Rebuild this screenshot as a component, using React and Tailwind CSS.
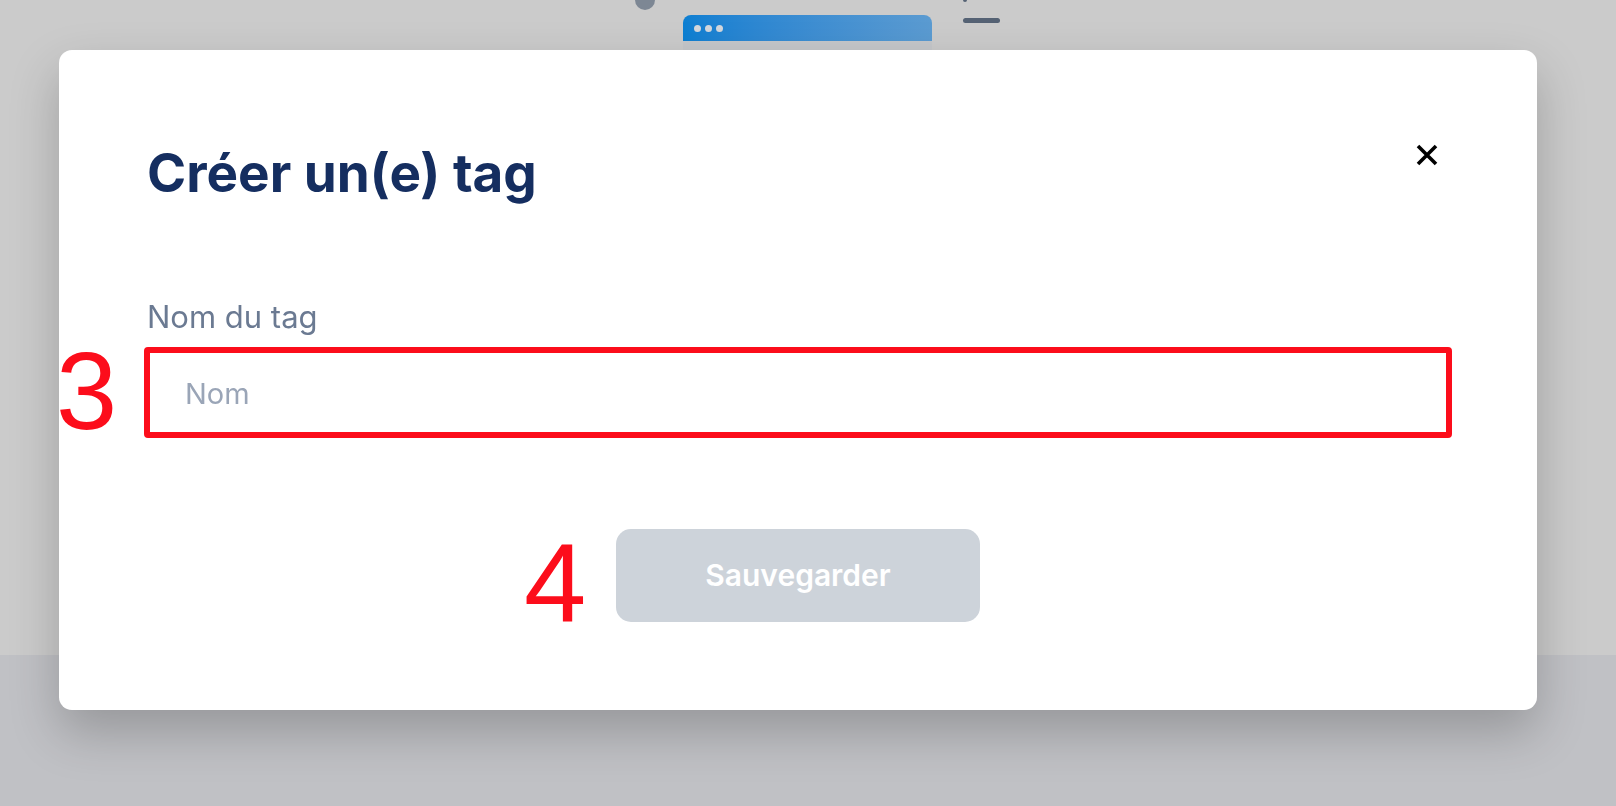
import React from 'react'

const App = () => {
  return (
    <div className="relative flex h-[806px] w-[1616px] flex-col overflow-hidden bg-[#cbcbcb] font-['Inter',sans-serif]">
      {/* page behind the scrim */}
      <div className="flex h-[655px] items-start pl-[635px]">
        <div className="mt-[-10px] h-[20px] w-[20px] rounded-full bg-[#7d8794]" />
        <div className="ml-[28px] mt-[15px] w-[249px]">
          <div className="flex h-[26px] items-center gap-[4px] rounded-t-[8px] bg-linear-to-r from-[#0c7fd2] to-[#5b9bd1] pl-[11px]">
            <span className="h-[7px] w-[7px] rounded-full bg-[#d3d7dc]" />
            <span className="h-[7px] w-[7px] rounded-full bg-[#d3d7dc]" />
            <span className="h-[7px] w-[7px] rounded-full bg-[#d3d7dc]" />
          </div>
          <div className="h-[20px] bg-[#c5c7ca]" />
        </div>
        <div className="ml-[31px] flex flex-col">
          <div className="mt-[-2px] h-[4px] w-[4px] rounded-full bg-[#556274]" />
          <div className="mt-[16px] h-[5px] w-[37px] rounded-full bg-[#556274]" />
        </div>
      </div>
      <div className="flex-1 bg-[#c0c1c5]" />

      {/* Modal */}
      <div className="fixed left-[59px] top-[50px] w-[1478px] rounded-[13px] bg-white px-[88px] pb-[88px] pt-[97px] shadow-[0_22px_50px_rgba(0,0,0,0.22)]">
        <div className="flex items-start justify-between">
          <h2 className="text-[53px] font-bold leading-none text-[#152e60]">
            Créer un(e) tag
          </h2>
          <button className="mr-[11px] mt-[-3px]">
            <svg width="22" height="22" viewBox="0 0 22 22">
              <path d="M2 2L20 20M20 2L2 20" stroke="#000" strokeWidth="3.6" />
            </svg>
          </button>
        </div>

        <p className="mt-[101px] text-[31px] leading-none text-[#6b7a92]">Nom du tag</p>

        <div className="relative mt-[17px]">
          <input
            className="h-[88px] w-full rounded-[6px] border-2 border-[#e3e7ed] pl-[36px] text-[29px] outline-none placeholder:text-[#9aa5b7]"
            placeholder="Nom"
          />
          <div className="pointer-events-none absolute -bottom-[1px] -left-[3px] -right-[3px] -top-[2px] rounded-[4px] border-[6px] border-[#fc0d1b]" />
          <span className="absolute left-[-91px] top-[-13px] font-['Liberation_Sans',sans-serif] text-[110px] leading-none text-[#fc0d1b]">
            3
          </span>
        </div>

        <div className="mt-[92px] flex justify-center">
          <div className="relative">
            <button className="h-[93px] w-[364px] rounded-[15px] bg-[#cdd3da] text-[30px] font-semibold text-white">
              Sauvegarder
            </button>
            <span className="absolute left-[-92px] top-[-2px] font-['Liberation_Sans',sans-serif] text-[112px] leading-none text-[#fc0d1b]">
              4
            </span>
          </div>
        </div>
      </div>
    </div>
  )
}

export default App
